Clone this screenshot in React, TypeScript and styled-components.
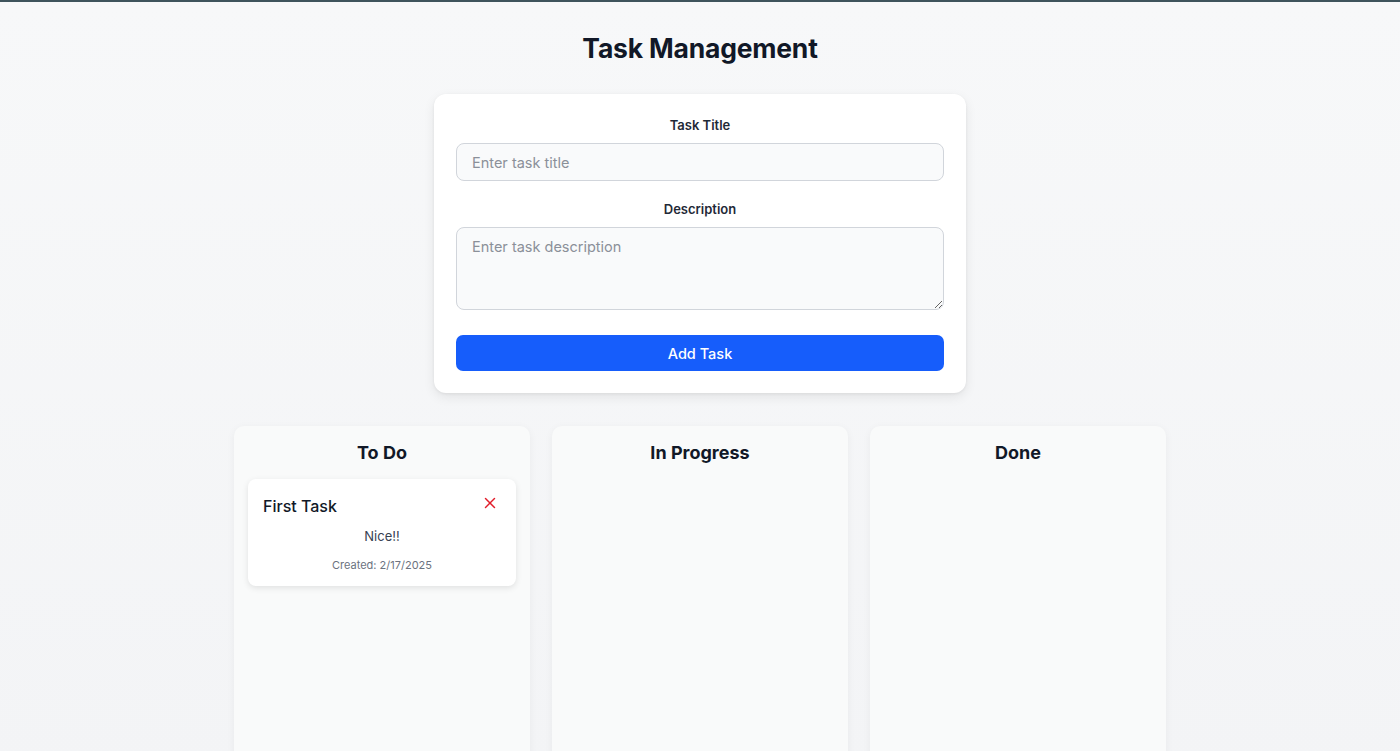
import styled, { createGlobalStyle } from "styled-components";
import { X } from "lucide-react";

const GlobalStyle = createGlobalStyle`
  * {
    box-sizing: border-box;
  }
  body {
    margin: 0;
    font-family: Inter, "Noto Sans", sans-serif;
    background: linear-gradient(180deg, #f7f8f9 0%, #f3f4f6 100%);
    color: #111827;
    overflow: hidden;
  }
`;

const Page = styled.div`
  min-height: 751px;
  border-top: 2px solid #3f545c;
  display: flex;
  flex-direction: column;
  align-items: center;
  padding-top: 30px;
`;

const Heading = styled.h1`
  margin: 0;
  font-size: 26.5px;
  font-weight: 700;
  letter-spacing: -0.2px;
  color: #111827;
`;

const FormCard = styled.form`
  margin-top: 30px;
  width: 532px;
  background: #ffffff;
  border-radius: 12px;
  box-shadow: 0 4px 12px rgba(0, 0, 0, 0.08), 0 1px 3px rgba(0, 0, 0, 0.06);
  padding: 23px 22px 22px;
  display: flex;
  flex-direction: column;
`;

const Label = styled.label`
  display: block;
  text-align: center;
  font-size: 13px;
  font-weight: 600;
  color: #1f2937;
  margin-bottom: 10px;
`;

const Field = styled.div<{ gap?: number }>`
  margin-bottom: ${(p) => p.gap ?? 20}px;
`;

const TextInput = styled.input`
  width: 100%;
  height: 38px;
  border: 1px solid #d1d5db;
  border-radius: 8px;
  background: #f9fafb;
  padding: 0 15px;
  font-family: inherit;
  font-size: 14.5px;
  color: #111827;
  &::placeholder {
    color: #8b9099;
  }
`;

const TextArea = styled.textarea`
  display: block;
  width: 100%;
  height: 83px;
  border: 1px solid #d1d5db;
  border-radius: 8px;
  background: #f9fafb;
  padding: 10px 15px;
  font-family: inherit;
  font-size: 14.5px;
  color: #111827;
  resize: vertical;
  &::placeholder {
    color: #8b9099;
  }
`;

const SubmitButton = styled.button`
  height: 36px;
  width: 100%;
  border: none;
  border-radius: 7px;
  background: #165dfb;
  color: #ffffff;
  font-family: inherit;
  font-size: 14.5px;
  font-weight: 500;
  cursor: pointer;
`;

const Board = styled.div`
  margin-top: 33px;
  display: grid;
  grid-template-columns: repeat(3, 296px);
  gap: 22px;
`;

const Column = styled.section`
  background: #f9fafa;
  border-radius: 10px;
  box-shadow: 0 2px 8px rgba(0, 0, 0, 0.05);
  padding: 14px 14px;
  min-height: 340px;
`;

const ColumnTitle = styled.h2`
  margin: 2px 0 16px;
  text-align: center;
  font-size: 18px;
  font-weight: 700;
  color: #111827;
`;

const TaskCard = styled.div`
  background: #ffffff;
  border-radius: 8px;
  box-shadow: 0 2px 6px rgba(0, 0, 0, 0.1);
  padding: 16px 15px 14px;
`;

const TaskHeader = styled.div`
  display: flex;
  justify-content: space-between;
  align-items: flex-start;
`;

const TaskTitle = styled.h3`
  margin: 0;
  font-size: 16px;
  font-weight: 500;
  color: #111827;
  line-height: 22px;
`;

const DeleteButton = styled.button`
  border: none;
  background: none;
  padding: 0;
  color: #e11d2a;
  display: flex;
  cursor: pointer;
  margin: -1px 2px 0 0;
`;

const TaskText = styled.p`
  margin: 11px 0 0;
  text-align: center;
  font-size: 13px;
  color: #374151;
`;

const TaskDate = styled.p`
  margin: 14px 0 0;
  text-align: center;
  font-size: 11px;
  color: #6b7280;
`;

type Task = {
  id: number;
  title: string;
  description: string;
  created: string;
  status: "todo" | "progress" | "done";
};

const tasks: Task[] = [
  {
    id: 1,
    title: "First Task",
    description: "Nice!!",
    created: "2/17/2025",
    status: "todo",
  },
];

const columns: { key: Task["status"]; label: string }[] = [
  { key: "todo", label: "To Do" },
  { key: "progress", label: "In Progress" },
  { key: "done", label: "Done" },
];

export default function App() {
  return (
    <>
      <GlobalStyle />
      <Page>
        <Heading>Task Management</Heading>
        <FormCard onSubmit={(e) => e.preventDefault()}>
          <Field>
            <Label>Task Title</Label>
            <TextInput placeholder="Enter task title" />
          </Field>
          <Field gap={25}>
            <Label>Description</Label>
            <TextArea placeholder="Enter task description" />
          </Field>
          <SubmitButton type="submit">Add Task</SubmitButton>
        </FormCard>
        <Board>
          {columns.map((col) => (
            <Column key={col.key}>
              <ColumnTitle>{col.label}</ColumnTitle>
              {tasks
                .filter((t) => t.status === col.key)
                .map((t) => (
                  <TaskCard key={t.id}>
                    <TaskHeader>
                      <TaskTitle>{t.title}</TaskTitle>
                      <DeleteButton aria-label="Delete task">
                        <X size={18} strokeWidth={2} />
                      </DeleteButton>
                    </TaskHeader>
                    <TaskText>{t.description}</TaskText>
                    <TaskDate>Created: {t.created}</TaskDate>
                  </TaskCard>
                ))}
            </Column>
          ))}
        </Board>
      </Page>
    </>
  );
}
